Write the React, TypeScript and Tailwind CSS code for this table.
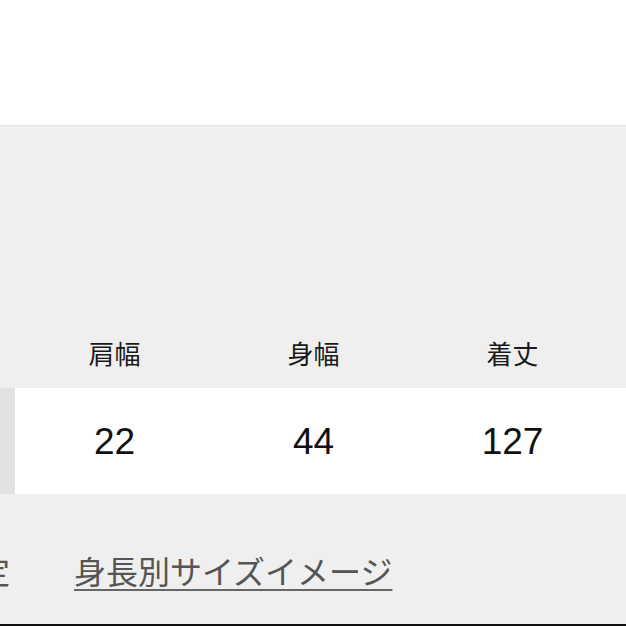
const jp = "font-['Hiragino_Sans','Noto_Sans_CJK_JP',sans-serif]"

const cols = [
  { label: '肩幅', value: '22' },
  { label: '身幅', value: '44' },
  { label: '着丈', value: '127' },
]

export default function App() {
  return (
    <div className="w-[626px] h-[626px] overflow-hidden flex flex-col bg-[#efefef]">
      <div className="h-[125px] bg-white shrink-0" />
      <div className="h-px bg-[#e3e3e3] shrink-0" />

      <div className="h-[192px] shrink-0" />

      {/* header row */}
      <div className="flex h-[70px] shrink-0 items-center">
        <div className="w-[15px] shrink-0" />
        {cols.map(c => (
          <div
            key={c.label}
            className={`w-[199px] shrink-0 text-center text-[26px] leading-none text-[#1a1a1a] ${jp}`}
          >
            {c.label}
          </div>
        ))}
      </div>

      {/* value row */}
      <div className="flex h-[106px] shrink-0 bg-white">
        <div className="w-[15px] shrink-0 bg-[#e2e2e2]" />
        {cols.map(c => (
          <div
            key={c.label}
            className="w-[199px] shrink-0 flex items-center justify-center text-[37px] leading-none text-[#111] font-['Liberation_Sans',Arial,sans-serif]"
          >
            {c.value}
          </div>
        ))}
      </div>

      {/* links */}
      <div className={`flex-1 flex items-start pt-[58px] text-[32px] leading-[36px] text-[#555] ${jp}`}>
        <div className="w-[10px] shrink-0 overflow-hidden flex justify-end">
          <span className="shrink-0 underline decoration-2 underline-offset-[5px] decoration-[#666]">定</span>
        </div>
        <a className="ml-[64px] pr-[6px] underline decoration-2 underline-offset-[5px] decoration-[#666]">
          身長別サイズイメージ
        </a>
      </div>
      <div className="h-[2px] bg-[#111] shrink-0" />
    </div>
  )
}
